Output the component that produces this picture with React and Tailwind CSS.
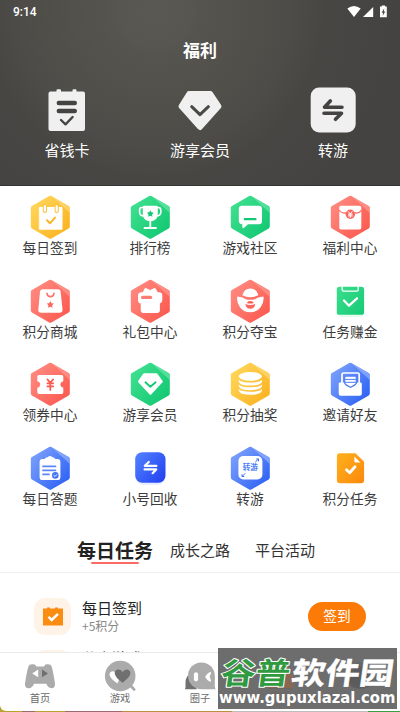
import { useId } from 'react';

const GRADIENTS = {
  yellow: ['#ffd65a', '#fbb321', '#ffe08a'],
  green: ['#3fe08f', '#13c873', '#7cebb2'],
  red: ['#ff8a80', '#fb5a50', '#ffa79f'],
  blue: ['#7ba0fb', '#2f63f5', '#a9c3ff'],
  indigo: ['#5585ff', '#1f3df0', '#5585ff'],
  orange: ['#ffb41f', '#fb860c', '#ffdf9c'],
};

function Icon({ color, plain, children }) {
  const id = useId();
  const [from, to, shine] = GRADIENTS[color];
  const fill = `url(#${id})`;
  return (
    <svg width="41" height="45" viewBox="0 0 41 45" fill="none" strokeLinecap="round" strokeLinejoin="round">
      <defs>
        <linearGradient id={id} x1="2" y1="8" x2="38" y2="36" gradientUnits="userSpaceOnUse">
          <stop stopColor={from} />
          <stop offset="1" stopColor={to} />
        </linearGradient>
      </defs>
      {!plain && (
        <>
          <path d="M20.3 2.9 37.6 12.8V31.6L20.3 41.5 3 31.6V12.8Z" fill={fill} stroke={fill} strokeWidth="4.4" />
          <path d="M22 1.6 38.3 10.9Q39.8 12 39.8 14V18Z" fill={shine} opacity=".55" />
        </>
      )}
      {children(fill, to)}
    </svg>
  );
}

const STAR = 'M0-3.4 1.1-1.3 3.4-.9 1.8.8 2.1 3.1 0 2.1-2.1 3.1-1.8.8-3.4-.9-1.1-1.3Z';

const CheckInIcon = () => (
  <Icon color="yellow">
    {() => (
      <>
        <path d="M9.7 12.5H32V34.2H9.7Z" fill="#fff" stroke="#fff" />
        <path d="M14.9 11V16M26.7 11V16" stroke="#fdc137" strokeWidth="4.2" />
        <path d="M14.9 11V15.8M26.7 11V15.8" stroke="#fff" strokeWidth="2.2" />
        <path d="M17 25.3 20 28.3 25 22.6" stroke="#f9b62b" strokeWidth="2" />
      </>
    )}
  </Icon>
);

const RankIcon = () => (
  <Icon color="green">
    {(fill, solid) => (
      <>
        <path d="M13.5 12.5H11.8Q9.6 12.5 9.6 15V17Q9.6 21 14 21M26.5 12.5H28.2Q30.8 12.5 30.8 15V17Q30.8 21 26 21" stroke="#fff" strokeWidth="1.6" />
        <path d="M12.8 12Q12.8 10.7 14 10.7H26.6Q27.8 10.7 27.8 12V19Q27.8 26 20.3 26.3 12.8 26 12.8 19Z" fill="#fff" />
        <path d="M20.3 26V32M14.5 33H26" stroke="#fff" strokeWidth="1.8" />
        <path d={STAR} transform="translate(20.3 18.6)" fill={solid} />
      </>
    )}
  </Icon>
);

const ChatIcon = () => (
  <Icon color="green">
    {(fill, solid) => (
      <>
        <path d="M12 10.8H29Q32 10.8 32 14V26Q32 29.3 29 29.3H18L13.8 33Q12.3 33.6 12.3 32V29.2Q8.8 29 8.8 26V14Q8.8 10.8 12 10.8Z" fill="#fff" />
        <path d="M14.8 24.2H25.5" stroke={solid} strokeWidth="2.2" />
      </>
    )}
  </Icon>
);

const WelfareIcon = () => (
  <Icon color="red">
    {() => (
      <>
        <rect x="9.3" y="10.8" width="22" height="23.6" rx="1.6" fill="#fff" />
        <path d="M9.5 15.5Q11 18 15.5 18H25.5Q30 18 31 15.5" stroke="#fb746b" strokeWidth="1.3" />
        <circle cx="20.3" cy="19.3" r="4.7" fill="#fb675e" />
        <path d="M18.4 16.7 20.3 19 22.2 16.7M18.4 19.2H22.2M18.4 20.9H22.2M20.3 19V22.4" stroke="#fff" strokeWidth="1" />
      </>
    )}
  </Icon>
);

const MallIcon = () => (
  <Icon color="red">
    {() => (
      <>
        <path d="M12.8 10.3H28Q30.2 10.3 30.6 12.5L32.5 30.5Q32.7 33.7 29.5 33.7H11.2Q8 33.7 8.3 30.5L10 12.5Q10.4 10.3 12.8 10.3Z" fill="#fff" />
        <path d="M17 14.4Q17.4 17.6 20.5 17.6T24 14.4" stroke="#fb746b" strokeWidth="1.6" />
        <path d={STAR} transform="translate(20.3 25.5) scale(1.05)" fill="#fb675e" />
      </>
    )}
  </Icon>
);

const GiftIcon = () => (
  <Icon color="red">
    {() => (
      <>
        <path d="M13 14 15.2 9.3 20.2 11.5 25 9.3 27.7 14Z" fill="#fff" stroke="#fff" />
        <path d="M12 13.2H29Q32.3 13.2 32.3 16.5V21Q32.3 24 29.9 24.6V31Q29.9 34 27 34H13.6Q10.7 34 10.7 31V24.6Q8 24 8 21V16.5Q8 13.2 12 13.2Z" fill="#fff" />
        <path d="M12.7 18.4H20.5" stroke="#fb7c73" strokeWidth="3.4" />
      </>
    )}
  </Icon>
);

const IngotIcon = () => (
  <Icon color="red">
    {() => (
      <>
        <path d="M12.3 16.3Q14 9.4 20.3 9.4T28.3 16.3Q20.3 20 12.3 16.3Z" fill="#fff" />
        <path d="M7.3 17.4Q13.5 18.2 15 20Q20.3 21.7 25.6 20Q27 18.2 33.4 17.4Q34.5 22 30.8 28Q27.3 33.3 20.3 33.3T9.8 28Q6.2 22 7.3 17.4Z" fill="#fff" />
        <path d="M16.8 24Q17.6 22 20.3 22T23.8 24Q20.3 25.2 16.8 24Z" fill="#fb5a50" />
        <path d="M15.4 25Q20.3 27 25.2 25Q24.8 29.8 20.3 29.8T15.4 25Z" fill="#fb675e" />
      </>
    )}
  </Icon>
);

const TaskEarnIcon = () => (
  <Icon color="green" plain>
    {(fill) => (
      <>
        <rect x="7.5" y="11" width="26" height="27" rx="4" fill="#e6faf0" />
        <rect x="6.8" y="7.8" width="27.3" height="28" rx="2.6" fill={fill} />
        <path d="M12.2 7.2V10.8Q12.2 12.2 13.6 12.2H26.8Q28.2 12.2 28.2 10.8V7.2" stroke="#fff" strokeWidth="1.3" />
        <path d="M14 21.5 19 26.7 27 19.4" stroke="#fff" strokeWidth="2.3" />
      </>
    )}
  </Icon>
);

const CouponIcon = () => (
  <Icon color="red">
    {() => (
      <>
        <path d="M9 13H31.6Q33.3 13 33.3 14.7V19.3Q30.4 20 30.4 22.5T33.3 25.8V30.2Q33.3 31.9 31.6 31.9H9Q7.3 31.9 7.3 30.2V25.8Q10.2 25 10.2 22.5T7.3 19.3V14.7Q7.3 13 9 13Z" fill="#fff" />
        <path d="M17.4 17.4 20.3 20.8 23.2 17.4M17.4 21.3H23.2M17.4 24.4H23.2M20.3 21V28" stroke="#fb5a50" strokeWidth="1.7" />
      </>
    )}
  </Icon>
);

const VipIcon = () => (
  <Icon color="green">
    {(fill, solid) => (
      <>
        <path d="M14 12.3H26.6L31.8 19.6 20.4 31.8 9 19.6Z" fill="#fff" stroke="#fff" strokeWidth="2" />
        <path d="M15.4 20.3 20.4 24.7 25.6 20.3" stroke={solid} strokeWidth="1.8" />
      </>
    )}
  </Icon>
);

const CoinsIcon = () => (
  <Icon color="yellow">
    {() => (
      <>
        {[28.6, 24, 19.4].map((y) => (
          <path key={y} d={`M8.7 ${y - 1.6}Q11 ${y + 1.2} 20.3 ${y + 1.2}T32 ${y - 1.6}V${y}Q31 ${y + 4.2} 20.3 ${y + 4.2}T8.7 ${y}Z`} fill="#fff" />
        ))}
        <ellipse cx="20.3" cy="14.3" rx="11.6" ry="4.4" fill="#fff" />
      </>
    )}
  </Icon>
);

const InviteIcon = () => (
  <Icon color="blue">
    {() => (
      <>
        <path d="M12 22V12.5Q12 11 13.5 11H27.7Q29.2 11 29.2 12.5V22" stroke="#fff" strokeWidth="1.7" />
        <path d="M10 20.4H13.2Q14.3 20.4 14.9 21.6L16 23.4Q20.5 26.3 25 23.4L26 21.6Q26.6 20.4 27.7 20.4H30.4Q31.8 20.4 31.8 21.8V31.8Q31.8 33.8 29.8 33.8H10.7Q8.7 33.8 8.7 31.8V21.8Q8.7 20.4 10 20.4Z" fill="#fff" />
        <path d="M14.2 13.7H26.8V21.5Q26 23.6 20.5 26 15 23.6 14.2 21.5Z" fill="#5481f9" />
        <path d="M15.3 14.8H25.7V21Q25 22.4 20.5 24.4 16 22.4 15.3 21Z" fill="#fff" />
        <path d="M15.5 17.4H25.5M15.5 20.3H25.5" stroke="#4f7df8" strokeWidth="1" />
      </>
    )}
  </Icon>
);

const QuizIcon = () => (
  <Icon color="blue">
    {() => (
      <>
        <path d="M12 13H14.8Q15.3 11 17 11.6 20 8.3 23 11.6 24.7 11 25.2 13H28Q30.4 13 30.4 15.5V31.5Q30.4 34 28 34H12Q9.6 34 9.6 31.5V15.5Q9.6 13 12 13Z" fill="#fff" />
        <path d="M13 20.4H25.5M13 24.4H25.5M13 28.4H19" stroke="#5c86f8" strokeWidth="1.7" />
        <circle cx="25.3" cy="29.4" r="3.3" fill="#4474f6" />
        <path d="M23.8 29.4 25 30.5 26.9 28.5" stroke="#fff" strokeWidth=".9" />
      </>
    )}
  </Icon>
);

const RecycleIcon = () => (
  <Icon color="indigo" plain>
    {(fill) => (
      <>
        <rect x="6" y="11" width="29" height="28" rx="8" fill="#e8eeff" />
        <rect x="5.2" y="6.3" width="30.3" height="30.5" rx="7" fill={fill} />
        <path d="M26.4 19.8H14.8L18.8 16M14.6 23.4H26.2L22.6 27.2" stroke="#fff" strokeWidth="2.2" />
      </>
    )}
  </Icon>
);

const TransferIcon = () => (
  <Icon color="blue">
    {() => (
      <>
        <rect x="8.4" y="10" width="24" height="23.5" rx="5" fill="#fff" />
        <text x="20.3" y="24.4" textAnchor="middle" fontSize="7.6" fontWeight="700" fill="#4b7bf7" className="font-['Noto_Sans_CJK_SC',sans-serif]">转游</text>
        <path d="M25.5 15.9 28.4 13.1M26.6 13H28.5V14.9M15 27.6 12.2 30.4M12 28.6V30.5H13.9" stroke="#3c6ef6" strokeWidth="1" />
      </>
    )}
  </Icon>
);

const PointTaskIcon = () => (
  <Icon color="orange" plain>
    {(fill) => (
      <>
        <path d="M10 7.3H25.5L34.1 15.8V34Q34.1 37.2 31 37.2H10Q6.9 37.2 6.9 34V10.5Q6.9 7.3 10 7.3Z" fill={fill} />
        <path d="M24.4 10.4 30.4 16.4H25.6Q24.4 16.4 24.4 15.2Z" fill="#fff" />
        <path d="M16.5 23.8 19.7 26.8 25 20.8" stroke="#fff" strokeWidth="2.8" />
      </>
    )}
  </Icon>
);

const features = [
  { label: '每日签到', icon: CheckInIcon },
  { label: '排行榜', icon: RankIcon },
  { label: '游戏社区', icon: ChatIcon },
  { label: '福利中心', icon: WelfareIcon },
  { label: '积分商城', icon: MallIcon },
  { label: '礼包中心', icon: GiftIcon },
  { label: '积分夺宝', icon: IngotIcon },
  { label: '任务赚金', icon: TaskEarnIcon },
  { label: '领券中心', icon: CouponIcon },
  { label: '游享会员', icon: VipIcon },
  { label: '积分抽奖', icon: CoinsIcon },
  { label: '邀请好友', icon: InviteIcon },
  { label: '每日答题', icon: QuizIcon },
  { label: '小号回收', icon: RecycleIcon },
  { label: '转游', icon: TransferIcon },
  { label: '积分任务', icon: PointTaskIcon },
];

function StatusBar() {
  return (
    <div className="flex h-6 items-center justify-between pl-[13px] pr-[13px]">
      <span className="font-[Roboto,sans-serif] text-[12px] font-medium leading-none">9:14</span>
      <svg width="40" height="14" viewBox="0 -1 40 14" fill="#fff">
        <path d="M.3 2.5Q7-2.6 13.7 2.5L7 10.9Z" />
        <path d="M26.2.9V11.1H16Z" />
        <path d="M34.8-.6H38V.6H39.8V11.2H33V.6H34.8Z" />
        <path d="M37.3 2.2 34.6 6.7H36.2L35.6 10.1 38.3 5.6H36.8Z" fill="#454441" />
      </svg>
    </div>
  );
}

function Header() {
  return (
    <header className="h-[186px] shrink-0 border-b border-[#363533] bg-[radial-gradient(circle_at_155px_10px,#5a5852_0px,#575650_38px,#55544e_44px,#52514b_80px,#4d4c48_135px,#474643_170px,#444341_250px)] text-white">
      <StatusBar />
      <h1 className="mt-[16px] text-center text-[17px] font-bold leading-5">福利</h1>
      <div className="mt-[26px] grid grid-cols-3 px-[0.5px] text-center text-[15px] leading-5">
        <div className="flex flex-col items-center">
          <svg width="48" height="48" viewBox="0 0 48 48" fill="none" strokeLinecap="round" strokeLinejoin="round">
            <path d="M7.5 5.5H13.5V4.3Q13.5 3.3 14.5 3.3H17Q18 3.3 18 4.3V5.5H29.5V4.3Q29.5 3.3 30.5 3.3H32.5Q33.5 3.3 33.5 4.3V5.5H40Q42 5.5 42 7.5V43Q42 45 40 45H7.5Q5.5 45 5.5 43V7.5Q5.5 5.5 7.5 5.5Z" fill="#f0f0f0" />
            <path d="M15.8 17H31.8M15.8 25H31.8" stroke="#454441" strokeWidth="4.4" />
            <path d="M18 34 22.5 38.3 29.6 31" stroke="#454441" strokeWidth="2.4" />
          </svg>
          <span className="mt-[6px]">省钱卡</span>
        </div>
        <div className="flex flex-col items-center">
          <svg width="48" height="48" viewBox="0 0 48 48" fill="none" strokeLinecap="round" strokeLinejoin="round">
            <path d="M13 7.6H34.5L43 20.3 24 41.5 5 20.3Z" fill="#f0f0f0" stroke="#f0f0f0" strokeWidth="5" />
            <path d="M15.7 20.7 24 28.7 32.4 20.7" stroke="#4a4945" strokeWidth="3" />
          </svg>
          <span className="mt-[6px]">游享会员</span>
        </div>
        <div className="flex flex-col items-center">
          <svg width="48" height="48" viewBox="0 0 48 48" fill="none" strokeLinecap="round" strokeLinejoin="round">
            <rect x="1.7" y="1.5" width="45" height="45" rx="8.5" fill="#f0f0f0" />
            <path d="M33 21.2H15.5L21.3 15M15 27.2H32.5L26.5 33.3" stroke="#444341" strokeWidth="3.6" />
          </svg>
          <span className="mt-[6px]">转游</span>
        </div>
      </div>
    </header>
  );
}

function FeatureGrid() {
  return (
    <div className="grid auto-rows-[83.7px] grid-cols-4 pt-[9px] text-[13.7px] leading-5 text-[#3c3c3c]">
      {features.map(({ label, icon: FeatureIcon }) => (
        <div key={label} className="flex flex-col items-center">
          <FeatureIcon />
          <span className="-mt-[3px]">{label}</span>
        </div>
      ))}
    </div>
  );
}

function Tasks() {
  return (
    <section className="flex min-h-0 flex-1 flex-col">
      <div className="flex h-[43px] shrink-0 items-start border-b border-[#eeeeee] pl-[77px] text-[15px] leading-6 text-[#333]">
        <div className="flex w-[76px] flex-col items-center">
          <span className="pt-[8px] text-[19px] font-bold leading-6 text-[#222]">每日任务</span>
          <span className="h-[2px] w-12 rounded-full bg-[#fb6b66]" />
        </div>
        <span className="ml-[17px] mt-[8px]">成长之路</span>
        <span className="ml-[25px] mt-[8px]">平台活动</span>
      </div>
      <div className="min-h-0 flex-1 overflow-hidden pl-[34px] pr-[34px] pt-[25px]">
        <TaskRow title="每日签到" points="+5积分" action="签到" />
        <TaskRow title="分享游戏" />
      </div>
    </section>
  );
}

function TaskRow({ title, points, action }) {
  return (
    <div className="mb-[15px] flex h-[37px] items-start">
      <div className="flex size-[37px] items-center justify-center rounded-[11px] bg-[#fff3e8]">
        <svg width="22" height="22" viewBox="0 0 22 22" fill="none">
          <path d="M1 3.5H5V2.5H8V3.5H13V2.5H16V3.5H21V20.5H1Z" fill="#fb8c12" />
          <path d="M6.5 11.8 9.7 15 16 8.8" stroke="#fff" strokeWidth="2.5" />
        </svg>
      </div>
      <div className={points ? 'ml-[11px] flex-1' : '-mt-[2px] ml-[11px] flex-1'}>
        <p className="text-[15px] leading-5 text-[#222]">{title}</p>
        {points && <p className="text-[12px] leading-[15px] text-[#888]">{points}</p>}
      </div>
      {action && (
        <button className="mt-[4px] h-[29px] w-[58px] rounded-full bg-[#fb7a08] text-[13.7px] leading-none text-white">{action}</button>
      )}
    </div>
  );
}

function BottomNav() {
  return (
    <nav className="grid h-[59px] shrink-0 grid-cols-5 border-t border-[#ebebeb] pt-[5px] text-center text-[10.3px] leading-4 text-[#6b6b6b]">
      <div className="flex flex-col items-center">
        <svg width="34" height="34" viewBox="0 0 34 34">
          <path d="M6.5 6.8Q8 6 12 6.5L13.3 8.5H21L22.3 6.5Q26.5 6 28 7.2 29.5 9 32 25.5Q32.3 30 28.5 30.3 25 30 23.3 25.8H11Q9.3 30.2 5.8 30.3 1.5 30 2 25.5 4.5 8.5 6.5 6.8Z" fill="#ababab" />
          <path d="M9.2 15.4 15.2 11.6V19.2Z" fill="#fff" />
          <path d="M25 15.4 19 11.6V19.2Z" fill="#707070" />
        </svg>
        <span className="-mt-[2px]">首页</span>
      </div>
      <div className="flex flex-col items-center">
        <svg width="34" height="34" viewBox="0 0 34 34">
          <path d="M25 25 31.2 31.5" stroke="#ababab" strokeWidth="2.6" strokeLinecap="round" />
          <circle cx="17.2" cy="18" r="15.3" fill="#ababab" />
          <path d="M14.5 25.5Q6.5 20 6.5 16.5 7 13 10.5 13.2L17 19Z" fill="#fff" />
          <path d="M19.6 24.7Q11.7 19 11.7 15.2 12 11.5 15.5 11.4 18.2 11.3 19.6 14 21 11.3 24 11.4 27.5 12 27.4 15.5 27 19 19.6 24.7Z" fill="#707070" />
        </svg>
        <span className="-mt-[2px]">游戏</span>
      </div>
      <div className="flex flex-col items-center">
        <svg width="34" height="34" viewBox="0 0 34 34">
          <path d="M5.5 17Q2.5 20 2.5 24.5V29Q2.5 30.3 1.8 31.3H14Z" fill="#707070" />
          <circle cx="18.4" cy="17.8" r="13.4" fill="#ababab" />
          <path d="M31.8 18V28.5Q32 30.5 32.8 31.3H20Z" fill="#ababab" />
          <path d="M13 16.3V21.3" stroke="#fff" strokeWidth="4.2" strokeLinecap="round" />
          <path d="M27 15Q24.5 16.5 23.3 18.8 24.5 21.2 27 22.6L25.7 18.8Z" fill="#fff" stroke="#fff" strokeWidth="2" strokeLinejoin="round" />
        </svg>
        <span className="-mt-[2px]">圈子</span>
      </div>
      <div className="flex flex-col items-center">
        <svg width="34" height="42" viewBox="0 0 34 42">
          <path d="M5 10Q17 14 29 10V31H5Z" fill="#f5873a" />
          <path d="M10 12V7Q17 2 24 7V12" stroke="#e94b32" strokeWidth="3" fill="none" />
          <path d="M8 34H26V42H8Z" fill="#e88a60" opacity=".5" />
        </svg>
      </div>
      <div className="flex flex-col items-center">
        <svg width="34" height="34" viewBox="0 0 34 34">
          <circle cx="17" cy="11" r="7" fill="#ababab" />
          <ellipse cx="17" cy="24" rx="12" ry="7" fill="#707070" />
        </svg>
      </div>
    </nav>
  );
}

function Watermark() {
  return (
    <div className="absolute left-[218px] top-[648px] h-[61px] w-[179px] bg-[#626262]/93">
      <svg width="179" height="61" viewBox="0 0 179 61" className="font-['Noto_Sans_CJK_SC',sans-serif] font-bold">
        <path d="M52 16H70V26H75V40H50V26H52Z" fill="#a66a42" opacity=".5" />
        <circle cx="141" cy="29" r="11" fill="#4f4f4f" opacity=".4" />
        <g transform="skewX(-8)" fontSize="30">
          <text x="7" y="36.5" textLength="69" lengthAdjust="spacingAndGlyphs" fill="#2f9a40" stroke="#fff" strokeWidth="2" paintOrder="stroke" strokeLinejoin="round">谷普</text>
          <text x="77.5" y="36.5" textLength="102" lengthAdjust="spacingAndGlyphs" fill="#fff" stroke="#fff" strokeWidth=".5">软件园</text>
        </g>
        <text x="1" y="54.5" textLength="176.5" lengthAdjust="spacingAndGlyphs" fontSize="15" fill="#fff" className="font-['DejaVu_Sans',sans-serif]">www.gupuxlazal.com</text>
      </svg>
    </div>
  );
}

export default function App() {
  return (
    <div className="relative flex h-[712px] w-[400px] flex-col overflow-hidden bg-[linear-gradient(90deg,#b8a12d_0_22px,#9a6b72_22px_35px,#b8a12d_35px_65px,#9a6b72_65px_122px,#b89040_122px_232px,#bdbdbd_232px_368px,#3f9a48_368px)] font-['Noto_Sans_CJK_SC',sans-serif]">
      <div className="flex h-[711px] flex-col overflow-hidden rounded-bl-[6px] bg-white">
        <Header />
        <FeatureGrid />
        <Tasks />
        <BottomNav />
      </div>
      <Watermark />
    </div>
  );
}
